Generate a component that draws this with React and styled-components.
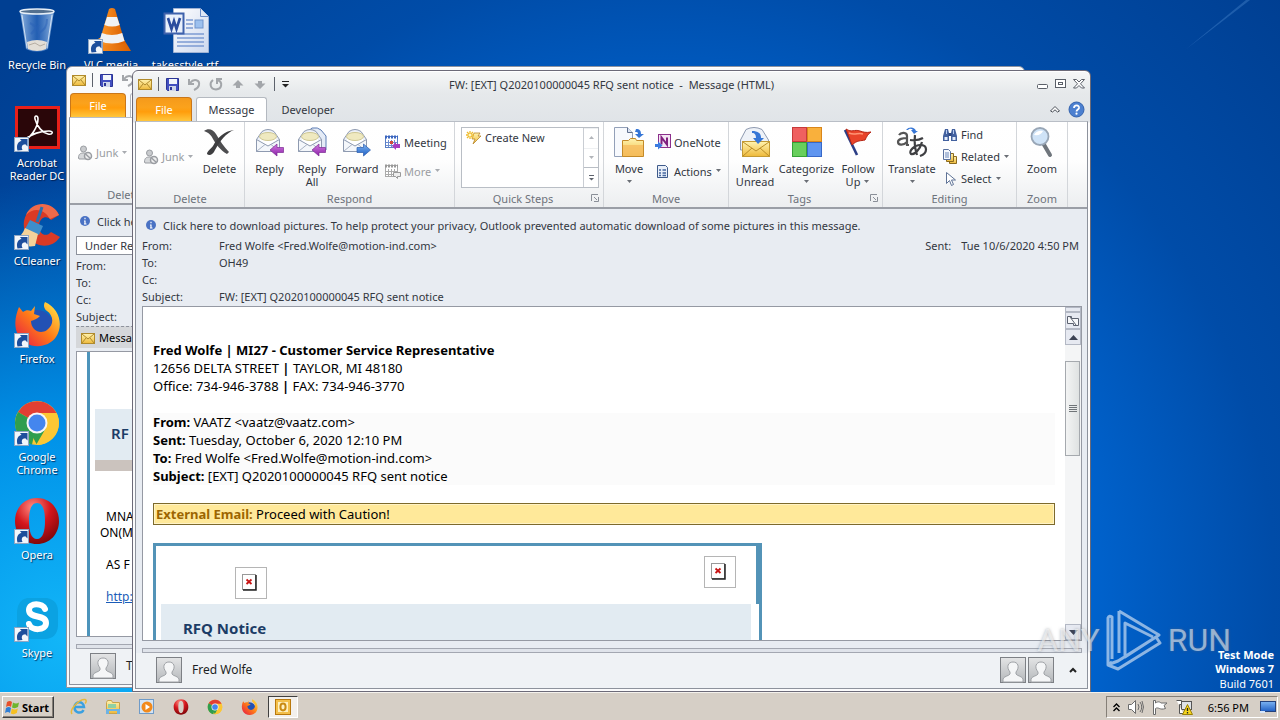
import styled, { createGlobalStyle, css } from "styled-components";

const GlobalStyle = createGlobalStyle`
  * {
    box-sizing: border-box;
  }
  body {
    margin: 0;
    font-family: "Noto Sans", "Open Sans", sans-serif;
    font-size: 11px;
    line-height: 13px;
    color: #33373f;
    overflow: hidden;
  }
  button {
    font: inherit;
    color: inherit;
    background: none;
    border: 0;
    padding: 0;
    margin: 0;
  }
  p {
    margin: 0;
  }
  svg {
    display: block;
    flex: none;
  }
`;

/* ---------- desktop ---------- */
const Screen = styled.div`
  display: flex;
  flex-direction: column;
  height: 100vh;
`;
const Desktop = styled.main`
  position: relative;
  flex: 1;
  min-height: 0;
  overflow: hidden;
  background: radial-gradient(
      ellipse 36% 66% at 5% 92%,
      rgba(18, 182, 248, 1) 0%,
      rgba(0, 158, 244, 0.85) 45%,
      rgba(0, 120, 225, 0) 100%
    ),
    radial-gradient(
      ellipse 66% 125% at 52% 85%,
      #0078e8 0%,
      #0068d6 45%,
      #004ca8 72%,
      #003f92 100%
    );
`;
const LightRay = styled.svg`
  position: absolute;
  top: 0;
  right: 0;
`;
const ShortcutArea = styled.div`
  display: flex;
  padding-top: 7px;
`;
const ShortcutColumn = styled.div`
  display: flex;
  flex-direction: column;
`;
const ShortcutButton = styled.button`
  display: flex;
  flex-direction: column;
  align-items: center;
  width: 74px;
  height: 98px;
  gap: 3px;
  color: #fff;
  text-shadow: 1px 1px 1px rgba(0, 20, 60, 0.8);
`;
const ShortcutLabel = styled.span`
  width: 64px;
  white-space: ${(props) => (props.$wrap ? "normal" : "nowrap")};
  display: flex;
  justify-content: center;
  text-align: center;
`;

/* ---------- windows ---------- */
const WindowFrame = styled.section`
  position: absolute;
  display: flex;
  flex-direction: column;
  left: ${(props) => props.$left};
  right: ${(props) => props.$right};
  top: ${(props) => props.$top};
  bottom: ${(props) => props.$bottom};
  padding: 0 2px 2px;
  border: 1px solid ${(props) => (props.$active ? "#6c6a78" : "#8d93a0")};
  border-radius: 6px 6px 0 0;
  background: ${(props) =>
    props.$active
      ? "linear-gradient(#f6f7f7 0, #e6e9eb 22px, #e0e4e8 51px, #fbfbfc 52px)"
      : "#f9fafb"};
  box-shadow: inset 0 1px 0 #fff;
`;
const TitleBar = styled.header`
  display: grid;
  grid-template-columns: 1fr auto 1fr;
  align-items: center;
  height: 26px;
  flex: none;
`;
const QuickAccess = styled.div`
  display: flex;
  align-items: center;
  gap: 6px;
  padding-left: 3px;
`;
const BarSeparator = styled.span`
  width: 1px;
  height: 14px;
  background: #5d626c;
`;
const IconButton = styled.button`
  display: flex;
  align-items: center;
  justify-content: center;
`;
const WindowTitle = styled.h1`
  margin: 0;
  font-size: 11px;
  font-weight: 400;
  white-space: pre;
`;
const WindowButtons = styled.div`
  display: flex;
  justify-content: flex-end;
  gap: 6px;
  padding-right: 3px;
`;
const TabRow = styled.nav`
  display: flex;
  align-items: flex-end;
  height: 24px;
  flex: none;
  padding-left: 1px;
`;
const FileTab = styled.button`
  width: 56px;
  height: 24px;
  color: #fff;
  border: 1px solid #c9771a;
  border-bottom: 0;
  border-radius: 4px 4px 0 0;
  background: linear-gradient(#f59a1b, #fba21c 40%, #ff9d0c 60%, #ffc63c);
`;
const Tab = styled.button`
  width: ${(props) => props.$width};
  height: 24px;
  margin-left: 4px;
  border-radius: 3px 3px 0 0;
  ${(props) =>
    props.$selected &&
    css`
      border: 1px solid #b4b9c0;
      border-bottom: 0;
      background: #fff;
    `}
`;
const TabRowEnd = styled.div`
  display: flex;
  align-items: center;
  gap: 8px;
  height: 24px;
  margin-left: auto;
  padding-right: 3px;
`;
const WindowBody = styled.div`
  display: flex;
  flex-direction: column;
  flex: 1;
  min-height: 0;
  border: 1px solid #8d929c;
  border-top-color: #b9bec6;
  background: #e8ecf2;
`;

/* ---------- ribbon ---------- */
const Ribbon = styled.div`
  display: flex;
  flex: none;
  height: 87px;
  border-bottom: 2px solid #9a9ea6;
  background: linear-gradient(#fff, #fefefe 45%, #eceef0);
  overflow: hidden;
`;
const Group = styled.section`
  display: flex;
  flex-direction: column;
  flex: none;
  width: ${(props) => props.$width};
  border-right: 1px solid #d3d6da;
`;
const GroupItems = styled.div`
  display: flex;
  height: 69px;
  padding: ${(props) => props.$padding || "4px 0 0 3px"};
`;
const GroupFooter = styled.footer`
  display: flex;
  align-items: center;
  height: 14px;
  color: #6d727b;
`;
const GroupName = styled.span`
  flex: 1;
  text-align: center;
`;
const Launcher = styled.button`
  width: 12px;
  height: 12px;
`;
const BigButton = styled.button`
  display: flex;
  flex-direction: column;
  align-items: center;
  justify-content: flex-start;
  width: ${(props) => props.$width};
  flex: none;
  gap: 4px;
  white-space: nowrap;
`;
const BigLabel = styled.span`
  display: flex;
  flex-direction: column;
  align-items: center;
`;
const LabelLine = styled.span`
  display: flex;
  align-items: center;
  gap: 3px;
  min-height: 13px;
`;
const SmallStack = styled.div`
  display: flex;
  flex-direction: column;
  justify-content: center;
  gap: ${(props) => props.$gap};
  height: 61px;
  padding-left: 4px;
`;
const SmallButton = styled.button`
  display: flex;
  align-items: center;
  gap: 3px;
  height: 16px;
  white-space: nowrap;
  color: ${(props) => (props.$disabled ? "#9a9da2" : "inherit")};
`;
const Gallery = styled.div`
  display: flex;
  width: 138px;
  height: 61px;
  border: 1px solid #b9bec5;
  background: #fff;
`;
const GalleryList = styled.div`
  flex: 1;
  padding: 1px 4px;
`;
const GalleryScroll = styled.div`
  display: grid;
  grid-template-rows: 1fr 1fr 1fr;
  width: 15px;
  border-left: 1px solid #c9cdd3;
`;
const GalleryStep = styled.button`
  display: flex;
  align-items: center;
  justify-content: center;
  border-top: 1px solid ${(props) => (props.$more ? "#b9bec5" : "#eef0f2")};
`;

/* ---------- message header ---------- */
const InfoBar = styled.div`
  display: flex;
  align-items: center;
  flex: none;
  gap: 6px;
  height: 20px;
  margin: 6px 0 2px;
  padding-left: 9px;
  white-space: nowrap;
`;
const FollowBox = styled.div`
  flex: none;
  height: 19px;
  margin: 3px 6px 2px;
  padding: 2px 8px;
  border: 1px solid #8d929c;
  background: #fff;
`;
const HeaderRows = styled.dl`
  flex: none;
  margin: 0 8px 1px 6px;
`;
const HeaderRow = styled.div`
  display: flex;
  align-items: center;
  height: 17px;
`;
const HeaderName = styled.dt`
  width: 77px;
  flex: none;
`;
const HeaderValue = styled.dd`
  margin: 0;
  flex: ${(props) => (props.$grow ? 1 : "none")};
  white-space: nowrap;
`;
const SentName = styled.dt`
  margin-right: 10px;
`;
const Attachments = styled.div`
  display: flex;
  align-items: center;
  gap: 4px;
  flex: none;
  height: 22px;
  margin: 0 6px 3px;
  padding-left: 5px;
  border-top: 1px dashed #8d929c;
  background: #d5d7da;
  color: #000;
`;

/* ---------- reading pane ---------- */
const Pane = styled.div`
  display: flex;
  flex: 1;
  min-height: 0;
  margin: 0 5px 0 6px;
  border: 1px solid #9599a3;
  background: #fff;
`;
const Mail = styled.article`
  flex: 1;
  min-width: 0;
  overflow: hidden;
  padding: 34px 10px 0;
  font-size: 13px;
  line-height: 18px;
  color: #000;
`;
const MailBlock = styled.div`
  margin-bottom: 18px;
  background: ${(props) => (props.$tinted ? "#fbfbfb" : "none")};
`;
const Caution = styled.p`
  height: 22px;
  margin-bottom: 18px;
  padding: 1px 2px;
  border: 1px solid #7d6a2c;
  background: #ffe99a;
  box-shadow: inset 0 0 0 1px #fff3c6;
`;
const CautionLabel = styled.strong`
  color: #9c6500;
`;
const Card = styled.section`
  width: 609px;
  border: 3px solid #5393b7;
  border-bottom: 0;
`;
const CardTop = styled.div`
  display: flex;
  justify-content: space-between;
  align-items: flex-start;
  height: 58px;
  padding: 10px 20px 0 79px;
  border-right: 3px solid #5393b7;
`;
const BrokenImage = styled.span`
  display: flex;
  align-items: center;
  justify-content: center;
  width: 32px;
  height: 32px;
  margin-top: ${(props) => (props.$low ? "11px" : "0")};
  padding-right: 3px;
  padding-bottom: 1px;
  border: 1px solid #b5b5b5;
`;
const CardHeading = styled.h2`
  margin: 0 8px 0 5px;
  height: 60px;
  padding: 15px 22px;
  font-size: 15px;
  line-height: 18px;
  color: #1c3c66;
  background: #e2ebf2;
`;
const ScrollBar = styled.div`
  display: flex;
  flex-direction: column;
  width: 16px;
  flex: none;
  background: #f4f5f6;
`;
const ScrollStep = styled.button`
  display: flex;
  align-items: center;
  justify-content: center;
  height: ${(props) => props.$height || "16px"};
  border: 1px solid #b3b8c4;
  background: #e6e9f1;
`;
const Track = styled.div`
  flex: 1;
  padding-top: 16px;
`;
const Thumb = styled.div`
  display: flex;
  align-items: center;
  justify-content: center;
  height: 95px;
  margin-right: 1px;
  border: 1px solid #a5a9ae;
  background: linear-gradient(90deg, #f3f4f4, #dfe2e2);
`;
const Splitter = styled.div`
  flex: none;
  height: 5px;
  margin: 7px 5px 0 6px;
  border: 1px solid #a3a7b1;
  background: #dfe3ea;
`;
const PeoplePane = styled.footer`
  display: flex;
  align-items: center;
  flex: none;
  gap: 10px;
  height: 35px;
  padding: 0 2px 2px 20px;
  font-size: 12px;
  background: #eff2f5;
  color: #1d1f23;
`;
const PeopleList = styled.div`
  display: flex;
  align-items: center;
  gap: 2px;
  margin-left: auto;
`;
const ExpandButton = styled(IconButton)`
  width: 24px;
  margin-left: 5px;
`;

/* ---------- background message ---------- */
const StripeMail = styled.article`
  flex: 1;
  min-width: 0;
  overflow: hidden;
  margin-left: 10px;
  border-left: 3px solid #4d94bb;
  padding: 57px 10px 0 5px;
  font-size: 12px;
  line-height: 16px;
  color: #000;
`;
const StripeHeading = styled.h2`
  margin: 0 0 38px;
  height: 62px;
  padding: 15px 16px;
  font-size: 15px;
  line-height: 18px;
  font-weight: 600;
  color: #1c3c66;
  background: #e2ebf2;
  border-bottom: 11px solid #cbc3be;
`;
const StripeText = styled.p`
  margin: 0 0 16px 5px;
  text-indent: 6px;
`;
const MailLink = styled.a`
  color: #1b5cb8;
`;

/* ---------- overlay + taskbar ---------- */
const Watermark = styled.div`
  position: absolute;
  right: 49px;
  bottom: 20px;
  display: flex;
  align-items: center;
  gap: 6px;
  font-family: "Roboto", sans-serif;
  font-size: 32px;
  font-weight: 400;
  line-height: 64px;
  color: rgba(255, 255, 255, 0.55);
  text-shadow: 0 0 3px rgba(100, 105, 115, 0.5);
`;
const BuildInfo = styled.div`
  position: absolute;
  right: 6px;
  bottom: 0;
  text-align: right;
  font-weight: 700;
  line-height: 14px;
  color: #fff;
`;
const BuildNumber = styled.div`
  font-weight: 400;
  line-height: 16px;
`;
const Taskbar = styled.footer`
  display: flex;
  align-items: center;
  flex: none;
  height: 28px;
  padding: 1px 2px 0;
  border-top: 1px solid #f4f1ec;
  background: #d6cfc6;
  color: #000;
`;
const StartButton = styled.button`
  display: flex;
  align-items: center;
  gap: 1px;
  width: 52px;
  height: 22px;
  padding-left: 2px;
  font-weight: 700;
  font-size: 11px;
  border: 1px solid;
  border-color: #fff #404040 #404040 #fff;
  box-shadow: inset -1px -1px 0 #857f77;
`;
const TaskButtons = styled.div`
  display: flex;
  gap: 4px;
  margin-left: 10px;
`;
const TaskButton = styled.button`
  display: flex;
  align-items: center;
  justify-content: center;
  width: 30px;
  height: 22px;
  ${(props) =>
    props.$active &&
    css`
      border: 1px solid;
      border-color: #404040 #fff #fff #404040;
      background: #f3f0ec;
    `}
`;
const Tray = styled.div`
  display: flex;
  align-items: center;
  gap: 8px;
  height: 22px;
  margin-left: auto;
  padding: 0 1px 0 6px;
  border: 1px solid;
  border-color: #857f77 #fff #fff #857f77;
`;
const Clock = styled.time`
  margin: 0 3px 0 7px;
`;

/* ---------- drawings ---------- */
const Gradients = () => (
  <svg width="0" height="0" style={{ position: "absolute" }} aria-hidden="true">
    <defs>
      <linearGradient id="gold" x1="0" y1="0" x2="0" y2="1">
        <stop offset="0" stopColor="#fff3b0" />
        <stop offset="1" stopColor="#eeb93a" />
      </linearGradient>
      <linearGradient id="paper" x1="0" y1="0" x2="1" y2="1">
        <stop offset="0" stopColor="#ffffff" />
        <stop offset="1" stopColor="#ccd8ee" />
      </linearGradient>
      <linearGradient id="purple" x1="0" y1="0" x2="0" y2="1">
        <stop offset="0" stopColor="#d37be0" />
        <stop offset="1" stopColor="#8a1fa8" />
      </linearGradient>
      <linearGradient id="blue" x1="0" y1="0" x2="0" y2="1">
        <stop offset="0" stopColor="#7db4f2" />
        <stop offset="1" stopColor="#1f5fc4" />
      </linearGradient>
      <linearGradient id="cone" x1="0" y1="0" x2="1" y2="0">
        <stop offset="0" stopColor="#ff9a2a" />
        <stop offset="1" stopColor="#d95f00" />
      </linearGradient>
      <radialGradient id="operaRed" cx="0.4" cy="0.2" r="0.9">
        <stop offset="0" stopColor="#ff8a80" />
        <stop offset="0.45" stopColor="#d4161c" />
        <stop offset="1" stopColor="#6e0508" />
      </radialGradient>
      <linearGradient id="glass" x1="0" y1="0" x2="1" y2="0">
        <stop offset="0" stopColor="#b5d2f2" stopOpacity="0.8" />
        <stop offset="0.5" stopColor="#3f78cc" stopOpacity="0.55" />
        <stop offset="1" stopColor="#b5d2f2" stopOpacity="0.8" />
      </linearGradient>
      <linearGradient id="fox" x1="0" y1="1" x2="1" y2="0">
        <stop offset="0" stopColor="#e3124a" />
        <stop offset="0.5" stopColor="#ff7a18" />
        <stop offset="1" stopColor="#fff04a" />
      </linearGradient>
      <linearGradient id="avatar" x1="0" y1="0" x2="0" y2="1">
        <stop offset="0" stopColor="#e4e5e6" />
        <stop offset="1" stopColor="#b4b7ba" />
      </linearGradient>
    </defs>
  </svg>
);

const ShortcutArrow = () => (
  <g>
    <rect x="1.5" y="32.5" width="14" height="14" fill="#f2f6fb" stroke="#8fa6c4" />
    <path
      d="M4.500 45.500C3 40 5 36.500 8.500 36L7 34h7.500v7.500L12.300 39.300C9 39.500 8 42 9.500 45z"
      fill="#1d4e9c"
    />
  </g>
);

const RecycleIcon = () => (
  <svg width="48" height="48" viewBox="0 0 48 48">
    <path d="M7 4l6 38q11 6 22 0l6-38z" fill="url(#glass)" />
    <path d="M14 35q10-4 20 0l-1 7q-9 4-18 0z" fill="#e3ded6" />
    <path d="M16 38l6-2 5 3 5-2" stroke="#b5ada3" fill="none" />
    <path d="M17 16c6 3 10 8 9 15M34 12c0 8-3 11-8 14M18 27l8-9" stroke="#2a62b8" strokeWidth="2" fill="none" opacity="0.5" />
    <ellipse cx="24" cy="4.500" rx="17" ry="2.500" fill="#54708f" stroke="#e6eef6" strokeWidth="1.500" />
    <path d="M9 8l5 33M39 8l-5 33" stroke="#e8f2fc" strokeWidth="1" opacity="0.8" />
  </svg>
);

const VlcIcon = () => (
  <svg width="48" height="48" viewBox="0 0 48 48">
    <path d="M12 31h24l8 13H4z" fill="url(#cone)" />
    <path d="M22 2q3-2 6 0l10 34q-13 6-26 0z" fill="url(#cone)" />
    <path d="M20 10h10l2.700 8q-7.500 3-15.300 0z" fill="#f0f2f4" />
    <path d="M14.800 26q10 4 20.400 0l2.300 8q-12.500 5-25 0z" fill="#f0f2f4" />
    <ShortcutArrow />
  </svg>
);

const RtfIcon = () => (
  <svg width="48" height="48" viewBox="0 0 48 48">
    <path d="M12.500 1.500h27l8 8v36h-35z" fill="url(#paper)" stroke="#9fb2d4" />
    <path d="M39.500 1.500v8h8" fill="#dfe8f6" stroke="#6f8fc8" />
    <rect x="34" y="13" width="8" height="8" fill="#9cc0ee" stroke="#6f93cc" />
    <path d="M25 13h7M25 17h7M25 21h7M16 27h27M16 31h27M16 35h27M16 39h27" stroke="#7c9ad2" strokeWidth="1.500" />
    <rect x="3.500" y="6.500" width="19" height="20" fill="#e9f0fb" stroke="#3f62ac" strokeWidth="2" />
    <path d="M7 11l3.500 11L13 14l2.500 8L19 11" fill="none" stroke="#2b4c9e" strokeWidth="2.600" />
  </svg>
);

const AcrobatIcon = () => (
  <svg width="48" height="48" viewBox="0 0 48 48">
    <rect x="3.500" y="2.500" width="42" height="40" fill="#2a0609" stroke="#e8201a" strokeWidth="3" />
    <path
      d="M13 34c5-2 12-12 12-20 0-4-4-4-3 0 2 8 8 14 13 15 5 1 6-3 1-3-8 0-18 3-23 8z"
      fill="none"
      stroke="#fff"
      strokeWidth="1.600"
    />
    <ShortcutArrow />
  </svg>
);

const CcleanerIcon = () => (
  <svg width="48" height="48" viewBox="0 0 48 48">
    <path d="M46 12C39-3 15-2 11 18c-3 22 24 34 36 16l-9-5c-5 6-13 2-12-7 1-8 8-10 12-5z" fill="#d93a25" />
    <path d="M46 12C39-3 19-2 13 12c8-8 18-6 24 4z" fill="#ef6a4a" />
    <path d="M29 4l-5 15" stroke="#2b6fae" strokeWidth="3" />
    <path d="M17 17l13 6-4 9-14-6z" fill="#3e8ecb" />
    <path d="M12 25l13 6-3 12q-12 2-20-6 7-4 10-12z" fill="#f3d29a" />
    <ShortcutArrow />
  </svg>
);

const FirefoxArt = () => (
  <g>
    <circle cx="24" cy="26" r="17" fill="#2351b4" />
    <path
      d="M32 1c14 6 19 23 11 35-9 13-31 12-38-2C0 24 3 13 6 6l4 5c3-2 5-2 8-1l4-5-1 8 6 2c-3 3-6 4-9 5 0 9 9 14 16 9 8-6 6-15 0-19-3-2-4-6-2-9z"
      fill="url(#fox)"
    />
  </g>
);
const FirefoxIcon = () => (
  <svg width="48" height="48" viewBox="0 0 48 48">
    <FirefoxArt />
    <ShortcutArrow />
  </svg>
);

const ChromeArt = () => (
  <g>
    <circle cx="24" cy="24" r="22" fill="#fbc734" />
    <path d="M24 24L5 13a22 22 0 0 1 38.500 1z" fill="#e23f33" />
    <path d="M24 24l-5 21.500A22 22 0 0 1 5 13z" fill="#2f9e4f" />
    <path d="M24 24h-9L5 13l10 16 9 17 9-16z" fill="#2f9e4f" />
    <path d="M24 14h19.500A22 22 0 0 1 23 46l10-17z" fill="#fbc734" />
    <circle cx="24" cy="24" r="10.500" fill="#f7f7f7" />
    <circle cx="24" cy="24" r="8.500" fill="#4486ee" />
  </g>
);
const ChromeIcon = () => (
  <svg width="48" height="48" viewBox="0 0 48 48">
    <ChromeArt />
    <ShortcutArrow />
  </svg>
);

const OperaArt = () => (
  <path
    fillRule="evenodd"
    d="M24 1C37 1 46 11 46 24S37 47 24 47 2 37 2 24 11 1 24 1zM24 6c-6 0-8 8-8 18s2 18 8 18 8-8 8-18-2-18-8-18z"
    fill="url(#operaRed)"
  />
);
const OperaIcon = () => (
  <svg width="48" height="48" viewBox="0 0 48 48">
    <OperaArt />
    <ShortcutArrow />
  </svg>
);

const SkypeIcon = () => (
  <svg width="48" height="48" viewBox="0 0 48 48">
    <path d="M14 3h20q11 2 11 14v14q-1 12-12 13H16q-12-2-12-13V16Q5 5 14 3z" fill="#0ba2e2" />
    <path
      d="M32 14c-2-6-16-7-16 1 0 9 17 4 17 13 0 8-15 8-17 1"
      fill="none"
      stroke="#fff"
      strokeWidth="6"
      strokeLinecap="round"
    />
    <ShortcutArrow />
  </svg>
);

const MailIcon = () => (
  <svg width="14" height="14" viewBox="0 0 14 14">
    <rect x="0.500" y="2.500" width="13" height="10" fill="url(#gold)" stroke="#b08a2c" />
    <path d="M1 3l6 5 6-5M1 12l4-5M13 12L9 7" fill="none" stroke="#b08a2c" />
  </svg>
);
const SaveIcon = () => (
  <svg width="15" height="15" viewBox="0 0 15 15">
    <path d="M1.500 1.500h12v12h-11l-1-1z" fill="#4350c0" stroke="#2b3596" />
    <rect x="4" y="2" width="8" height="5" fill="#f3f6fb" />
    <rect x="4" y="9" width="7" height="5" fill="#cfd6ea" />
    <rect x="5" y="10" width="2" height="3" fill="#2b3596" />
  </svg>
);
const UndoIcon = () => (
  <svg width="16" height="15" viewBox="0 0 16 15">
    <path d="M3 2v5h5M4 6c4-5 10-3 9 2-.500 3-3 4-5 5" fill="none" stroke="#a3a6aa" strokeWidth="2" />
  </svg>
);
const RedoIcon = () => (
  <svg width="16" height="15" viewBox="0 0 16 15">
    <path d="M5 3c-4 3-3 9 3 9.500 6-.500 7-7 2-9.500M9 7V2h5" fill="none" stroke="#a3a6aa" strokeWidth="2" />
  </svg>
);
const MoveArrow = ({ down }) => (
  <svg width="16" height="15" viewBox="0 0 16 15">
    <path
      d={down ? "M8 12L2.500 6.500H6V4h4v2.500h3.500z" : "M8 3l5.500 5.500H10V11H6V8.500H2.500z"}
      fill="#a3a6aa"
    />
  </svg>
);
const CustomizeIcon = () => (
  <svg width="9" height="10" viewBox="0 0 9 10">
    <path d="M1 2.500h7" stroke="#222" />
    <path d="M1 5h7L4.500 8.500z" fill="#222" />
  </svg>
);
const MoreStepsIcon = () => (
  <svg width="9" height="8" viewBox="0 0 9 8">
    <path d="M2 1.500h5" stroke="#5d626c" />
    <path d="M2 4h5L4.500 6.500z" fill="#5d626c" />
  </svg>
);
const Caret = ({ color = "#6a6e75", up }) => (
  <svg width="7" height="4" viewBox="0 0 7 4">
    <path d={up ? "M1 3h5L3.500 0z" : "M1 0h5L3.500 3z"} fill={color} />
  </svg>
);
const MinimizeIcon = () => (
  <svg width="12" height="12" viewBox="0 0 12 12">
    <rect x="0.500" y="6.500" width="10" height="4" rx="1" fill="#fff" stroke="#5a5f68" />
  </svg>
);
const RestoreIcon = () => (
  <svg width="12" height="12" viewBox="0 0 12 12">
    <rect x="0.500" y="1.500" width="10" height="8" fill="#fff" stroke="#5a5f68" />
    <rect x="3.500" y="4.500" width="4" height="2" fill="none" stroke="#5a5f68" />
  </svg>
);
const CloseIcon = () => (
  <svg width="12" height="12" viewBox="0 0 12 12">
    <path
      d="M.500 1.500h3L6 4l2.500-2.500h3L7.500 5.800l4 4.200h-3L6 7.500 3.500 10h-3l4-4.200z"
      fill="#fff"
      stroke="#5a5f68"
    />
  </svg>
);
const CollapseIcon = () => (
  <svg width="10" height="8" viewBox="0 0 10 8">
    <path d="M.500 6L5 1.500 9.500 6l-2 1L5 4.800 2.500 7z" fill="#fff" stroke="#4b5058" />
  </svg>
);
const HelpIcon = () => (
  <svg width="17" height="17" viewBox="0 0 17 17">
    <circle cx="8.500" cy="8.500" r="7.500" fill="#4c80d0" stroke="#3463ae" />
    <path d="M6 7c0-3.500 5.500-3.500 5 0-.300 1.500-2.500 1.500-2.500 3.500" fill="none" stroke="#fff" strokeWidth="1.800" />
    <circle cx="8.500" cy="12.700" r="1.100" fill="#fff" />
  </svg>
);
const InfoIcon = () => (
  <svg width="12" height="12" viewBox="0 0 12 12">
    <circle cx="6" cy="6" r="5" fill="#4a72c4" />
    <path d="M6 5.500V9M6 2.800v1.500M5 6h1M5 9h2.500" stroke="#fff" strokeWidth="1.200" />
  </svg>
);
const JunkIcon = () => (
  <svg width="16" height="16" viewBox="0 0 16 16">
    <circle cx="6.500" cy="4" r="3" fill="#c9cbce" stroke="#9a9da2" />
    <path d="M1.500 13c0-4 2-5 5-5s4 1 4.500 3v3h-9z" fill="#d6d8da" stroke="#9a9da2" />
    <circle cx="11" cy="11" r="3.500" fill="#eee" stroke="#9a9da2" strokeWidth="1.500" />
    <path d="M8.500 9l5 4.500" stroke="#9a9da2" strokeWidth="1.500" />
  </svg>
);
const DeleteIcon = () => (
  <svg width="32" height="32" viewBox="0 0 32 32">
    <path d="M1 5c4-3 9-2 12 3 4 7 8 13 13 18l-2 2C17 24 13 18 10 13 8 9 6 7 1 5z" fill="#4e4e50" />
    <path d="M31 4c-8 3-14 11-19 20-2 5-6 6-8 4 0-3 4-5 6-8C14 12 21 5 31 4z" fill="#3e3e40" />
  </svg>
);
const Envelope = () => (
  <g>
    <path d="M2.500 13.500L8 5.500q6-4 12 0l5.500 8v12h-23z" fill="#edf1f8" stroke="#8e9ab0" />
    <path d="M6 9h16v7l-8 4-8-4z" fill="#fff" />
    <ellipse cx="14" cy="10.500" rx="8.500" ry="4" fill="#efe9c0" stroke="#cfc894" />
    <path d="M2.500 13.500L14 20l11.500-6.500v12h-23z" fill="#f4f7fb" stroke="#8e9ab0" />
    <path d="M3 25l8-6.500M25 25l-8-6.500" stroke="#a8b2c4" />
  </g>
);
const ReplyIcon = () => (
  <svg width="32" height="32" viewBox="0 0 32 32">
    <Envelope />
    <path d="M16 24l7-6v3.500h6.500v5H23V30z" fill="url(#purple)" stroke="#7b2b94" strokeWidth="0.700" />
  </svg>
);
const ReplyAllIcon = () => (
  <svg width="32" height="32" viewBox="0 0 32 32">
    <path d="M10 7l6-5q6-1 9 2l5 6v14H10z" fill="#e4ebf6" stroke="#5c7cb4" />
    <Envelope />
    <path d="M16 24l7-6v3.500h6.500v5H23V30z" fill="url(#purple)" stroke="#7b2b94" strokeWidth="0.700" />
  </svg>
);
const ForwardIcon = () => (
  <svg width="32" height="32" viewBox="0 0 32 32">
    <Envelope />
    <path d="M29.500 24l-7-6v3.500H16v5h6.500V30z" fill="url(#blue)" stroke="#2a5cae" strokeWidth="0.700" />
  </svg>
);
const MeetingIcon = ({ gray }) => (
  <svg width="16" height="16" viewBox="0 0 16 16">
    <rect x="0.500" y="2.500" width="12" height="11" fill="#fff" stroke={gray ? "#aaa" : "#5a7ec6"} />
    <path d="M0 3h13" stroke={gray ? "#999" : "#3a66c0"} strokeWidth="3" strokeDasharray="2 1" />
    <path d="M3.500 6v7M6.500 6v7M9.500 6v7M1 8.500h11M1 11.500h11" stroke={gray ? "#aaa" : "#6f8fd0"} />
    {gray ? (
      <path d="M8.500 9.500h7v4h-3v2l-2-2h-2z" fill="#eee" stroke="#999" />
    ) : (
      <>
        <rect x="5" y="7" width="3" height="3" fill="#d04a3c" />
        <path d="M7 12l4-4v2h4v4h-4v2z" fill="#a63cc0" />
      </>
    )}
  </svg>
);
const QuickStepIcon = () => (
  <svg width="16" height="16" viewBox="0 0 16 16">
    <path d="M8 4h6l-2 3h3L7 15l2-5H6z" fill="url(#gold)" stroke="#b8862a" strokeWidth="0.800" />
    <path d="M4 2v8M0 6h8M1 3l6 6M7 3L1 9" stroke="#eebb2c" strokeWidth="1.300" />
    <circle cx="4" cy="6" r="1.500" fill="#fff6c8" />
  </svg>
);
const MoveIcon = () => (
  <svg width="32" height="32" viewBox="0 0 32 32">
    <path d="M1.500 1.500h13l5 5v24h-18z" fill="#f7f9fd" stroke="#93a0b8" />
    <path d="M14.500 1.500v5h5" fill="#dbe4f3" stroke="#61708e" />
    <path d="M9.500 30.500v-16h6l2-2h5l1 2h7v16z" fill="url(#gold)" stroke="#c48a28" />
    <path d="M10 19h20v11H10z" fill="#f6bd62" opacity="0.800" />
    <path d="M23 3c4 0 5 2 5 5h3l-5 4-4-4h3c0-2-1-2-3-2z" fill="#3676d6" />
  </svg>
);
const OneNoteIcon = () => (
  <svg width="16" height="16" viewBox="0 0 16 16">
    <rect x="3.500" y="0.500" width="12" height="13" fill="#f4e6f4" stroke="#8c2f8c" />
    <path d="M6.500 10.500v-7l5.500 7v-7" fill="none" stroke="#80207f" strokeWidth="2" />
    <path d="M0 10h3V7.500L7.500 11.500 3 15.500V13H0z" fill="#3c7be0" />
  </svg>
);
const ActionsIcon = () => (
  <svg width="16" height="16" viewBox="0 0 16 16">
    <path d="M2.500 2.500h8l2 2v10h-10z" fill="#e9eff8" stroke="#3e5a8a" />
    <path d="M4 7h2M4 10h2M4 12.500h2M7.500 7H11M7.500 10H11M7.500 12.500H11" stroke="#46679f" strokeWidth="1.500" />
  </svg>
);
const MarkUnreadIcon = () => (
  <svg width="32" height="32" viewBox="0 0 32 32">
    <path d="M1.500 14L7 3.500q8-4 16 0L29.500 14v10h-28z" fill="#eef2f8" stroke="#8e9ab0" />
    <rect x="3.500" y="15.500" width="27" height="15" fill="url(#gold)" stroke="#c49a34" />
    <path d="M4 16l13 9 13-9M4 30l9-8M30 30l-9-8" fill="none" stroke="#b98d28" />
    <path d="M13 5c6 0 9 2 9 7h3l-6 6-5-6h3c0-3-1-5-4-5z" fill="#3676d6" />
  </svg>
);
const CategorizeIcon = () => (
  <svg width="32" height="32" viewBox="0 0 32 32">
    <rect x="1.500" y="1.500" width="14" height="14" fill="#ef6060" stroke="#c73a3a" />
    <rect x="16.500" y="1.500" width="14" height="14" fill="#f9b03c" stroke="#d9861a" />
    <rect x="1.500" y="16.500" width="14" height="14" fill="#68cf5c" stroke="#36a136" />
    <rect x="16.500" y="16.500" width="14" height="14" fill="#5f95f0" stroke="#3768c8" />
  </svg>
);
const FlagIcon = () => (
  <svg width="32" height="32" viewBox="0 0 32 32">
    <path d="M3 4l12 25" stroke="#2c3f86" strokeWidth="2.600" />
    <path d="M4 3c6 4 8 0 14 2 3 1 6 2 11 1-3 2-4 4-6 8-4 1-8 0-13 5z" fill="#e8442a" stroke="#b52414" />
    <path d="M7 7c6 3 9-1 14 1" stroke="#ff9474" fill="none" strokeWidth="1.500" />
  </svg>
);
const TranslateIcon = () => (
  <svg width="32" height="32" viewBox="0 0 32 32">
    <path d="M10 4c3-4 9-3 10 1h2l-4 3-3-4h2c-2-2-4-1-5 0z" fill="#3676d6" />
    <path d="M3 9c2-3 8-3 8 1v9h2M11 12c-4 0-9 1-9 4s5 4 9 0" fill="none" stroke="#555" strokeWidth="2.200" />
    <path
      d="M14 14q8 1 13-2M19 9c-1 8 0 14 2 20M26 16c-2 8-8 13-11 12-3-3 4-9 9-9 8 0 8 8 0 11"
      fill="none"
      stroke="#3f4043"
      strokeWidth="2.200"
    />
  </svg>
);
const FindIcon = () => (
  <svg width="16" height="16" viewBox="0 0 16 16">
    <path d="M3 2h3l1 4v8H1V9zM10 2h3l2 7v5H9V6z" fill="#43619f" />
    <path d="M6.500 6h3v3h-3z" fill="#2e4680" />
    <path d="M2.500 10h3v3h-3zM10.500 10h3v3h-3z" fill="#e3ecfb" />
    <path d="M4.500 3v4M11.500 3v4" stroke="#b7caee" />
  </svg>
);
const RelatedIcon = () => (
  <svg width="16" height="16" viewBox="0 0 16 16">
    <path d="M7.500 7.500h7v7h-7z" fill="url(#gold)" stroke="#8a6a1e" />
    <path d="M4.500 4.500h7v8h-7z" fill="url(#gold)" stroke="#8a6a1e" />
    <path d="M1.500.500h5l2 2v8h-7z" fill="#f5f8fd" stroke="#58709e" />
    <path d="M3 4h4M3 6h4M3 8h4" stroke="#6b86b8" />
  </svg>
);
const SelectIcon = () => (
  <svg width="16" height="16" viewBox="0 0 16 16">
    <path d="M4.500 1.500v11l3-3 2 5 2-1-2-4.500h4z" fill="#fff" stroke="#5f7396" />
  </svg>
);
const ZoomIcon = () => (
  <svg width="32" height="32" viewBox="0 0 32 32">
    <path d="M17 17l7 12" stroke="#6f757c" strokeWidth="4" strokeLinecap="round" />
    <circle cx="14" cy="10.500" r="8.500" fill="#cfe3f7" stroke="#98a6b6" strokeWidth="1.800" />
    <path d="M8 9q3-5 9-4-2 5-9 4z" fill="#fff" />
  </svg>
);
const LauncherIcon = () => (
  <svg width="8" height="8" viewBox="0 0 8 8">
    <path d="M.500 7V.500H7M3 3l3 3M7.500 3v4.500H3" fill="none" stroke="#8a8f98" />
  </svg>
);
const RulerIcon = () => (
  <svg width="12" height="12" viewBox="0 0 12 12">
    <path d="M.500 1.500h4v2h7v7h-5v-2h-6z" fill="#f7f8fa" stroke="#5c6270" />
    <path d="M3 2l6 8" stroke="#5c6270" />
  </svg>
);
const Arrow = ({ up }) => (
  <svg width="9" height="5" viewBox="0 0 9 5">
    <path d={up ? "M0 5h9L4.500 0z" : "M0 0h9L4.500 5z"} fill="#3c4254" />
  </svg>
);
const GripIcon = () => (
  <svg width="8" height="7" viewBox="0 0 8 7">
    <path d="M0 .500h8M0 2.500h8M0 4.500h8M0 6.500h8" stroke="#6f7478" />
  </svg>
);
const BrokenIcon = () => (
  <svg width="15" height="17" viewBox="0 0 15 17">
    <rect x="0.500" y="0.500" width="13" height="15" fill="#fff" stroke="#999" />
    <path d="M14 1v15H1" fill="none" stroke="#222" strokeWidth="1.500" />
    <path d="M4.500 5.500l5 4.500M9.500 5.500L4.500 10" stroke="#c81414" strokeWidth="1.800" />
  </svg>
);
const AvatarIcon = () => (
  <svg width="26" height="26" viewBox="0 0 26 26">
    <rect x="0.500" y="0.500" width="25" height="25" fill="url(#avatar)" stroke="#7d8085" />
    <path
      d="M3 25v-3c1-3 6-3 7-5v-2C6 10 8 5 13 5s7 5 3 10v2c1 2 6 2 7 5v3z"
      fill="#f5f6f7"
      stroke="#9fa2a6"
    />
  </svg>
);
const ExpandIcon = () => (
  <svg width="8" height="6" viewBox="0 0 8 6">
    <path d="M1 5l3-3 3 3" fill="none" stroke="#222" strokeWidth="2" />
  </svg>
);
const PlayLogo = () => (
  <svg width="56" height="62" viewBox="0 0 56 62">
    <path
      d="M6 50V8q-3-2-4 1v47l4-3M13 2l40 24-34 22V14l28 14M13 2v42M2 56l10 4 42-26-4-6-38 24-8 3"
      fill="none"
      stroke="rgba(255,255,255,0.550)"
      strokeWidth="3"
      strokeLinejoin="round"
    />
  </svg>
);
const WindowsFlag = () => (
  <svg width="16" height="16" viewBox="0 0 16 16">
    <path d="M2 3q3-2 5 0L6 8Q4 6 1 8z" fill="#e8502a" />
    <path d="M8 3.500q3 2 6 0L13 8q-3 2-6 .500z" fill="#6fb52c" />
    <path d="M1 9q3-2 5 0l-1 5q-2-2-5 0z" fill="#2f7fd6" />
    <path d="M6.800 9.500q3 2 6 0l-1 4.500q-3 2-6 .500z" fill="#f6c022" />
  </svg>
);
const IeIcon = () => (
  <svg width="18" height="18" viewBox="0 0 18 18">
    <path d="M13.500 12c-2 4-9 3.500-9-3 0-6 9-6.500 9.500 0h-9" fill="none" stroke="#3aa0e0" strokeWidth="2.500" />
    <path d="M2 16C-1 12 9 1 15 1.500c2 .500 1 3 0 4" fill="none" stroke="#e7b93a" strokeWidth="1.500" />
  </svg>
);
const ExplorerIcon = () => (
  <svg width="18" height="18" viewBox="0 0 18 18">
    <path d="M2.500 15.500v-11l1-2h4l1 2h7v11z" fill="url(#gold)" stroke="#c9a24a" />
    <path d="M4 6h8v4H4z" fill="#8fd0a4" />
    <path d="M2 16v-5h14v5h-3v-3H5v3z" fill="#6eb3e4" />
  </svg>
);
const PlayerIcon = () => (
  <svg width="18" height="18" viewBox="0 0 18 18">
    <rect x="1.500" y="1.500" width="14" height="14" fill="#d4e4f4" stroke="#6f9bc8" />
    <circle cx="9" cy="9" r="5.500" fill="#f28a1c" />
    <path d="M7.500 6v6l4.500-3z" fill="#fff" />
  </svg>
);
const OutlookIcon = () => (
  <svg width="18" height="18" viewBox="0 0 18 18">
    <rect x="1.500" y="1.500" width="15" height="15" fill="#f3bf4a" stroke="#b9780c" />
    <rect x="4" y="4" width="10" height="10" fill="#fff0bf" />
    <ellipse cx="9" cy="9" rx="2.600" ry="3.400" fill="none" stroke="#c98a12" strokeWidth="2" />
  </svg>
);
const TrayChevron = () => (
  <svg width="7" height="9" viewBox="0 0 7 9">
    <path d="M.500 4l3-3 3 3M.500 8l3-3 3 3" fill="none" stroke="#000" strokeWidth="1.400" />
  </svg>
);
const SpeakerIcon = () => (
  <svg width="16" height="16" viewBox="0 0 16 16">
    <path d="M.500 5.500h3l4-4v13l-4-4h-3z" fill="#fff" stroke="#6b6b6b" />
    <path d="M10 5q2 3 0 6M12 3q3.500 5 0 10M14 2q3 6 0 12" fill="none" stroke="#6b6b6b" />
  </svg>
);
const ActionFlagIcon = () => (
  <svg width="16" height="16" viewBox="0 0 16 16">
    <path d="M1.500 1.500v14h2v-6c3-2 4 2 10 0l-1.500-3 3-2.500h-6c-2-2-4-1-5.500 0V1.500z" fill="#fff" stroke="#6b6b6b" />
  </svg>
);
const NetworkIcon = () => (
  <svg width="17" height="16" viewBox="0 0 17 16">
    <rect x="5.500" y="2.500" width="10" height="8" fill="#dfe3e8" stroke="#555" />
    <path d="M.500 1.500h5v4h-2v9h4" fill="#fff" stroke="#555" />
    <path d="M11.500 5.500l5 10h-10z" fill="#f5d41e" stroke="#9b8106" />
    <path d="M11.500 9v3M11.500 13v1.500" stroke="#222" strokeWidth="1.300" />
  </svg>
);
const ShowDesktopIcon = () => (
  <svg width="16" height="14" viewBox="0 0 16 14">
    <rect x="0.500" y="1.500" width="15" height="10" fill="url(#blue)" stroke="#24427c" />
    <rect x="0" y="11" width="5" height="2" fill="#d8e6f8" />
  </svg>
);

/* ---------- pieces ---------- */
const shortcuts = [
  [
    { name: "Recycle Bin", Icon: RecycleIcon },
    { name: "Acrobat Reader DC", Icon: AcrobatIcon, wrap: true },
    { name: "CCleaner", Icon: CcleanerIcon },
    { name: "Firefox", Icon: FirefoxIcon },
    { name: "Google Chrome", Icon: ChromeIcon, wrap: true },
    { name: "Opera", Icon: OperaIcon },
    { name: "Skype", Icon: SkypeIcon },
  ],
  [{ name: "VLC media", Icon: VlcIcon }],
  [{ name: "takesstyle.rtf", Icon: RtfIcon }],
];

const Big = ({ icon, lines, width, caret }) => (
  <BigButton $width={width}>
    {icon}
    <BigLabel>
      {lines.map((line, i) => (
        <LabelLine key={line}>
          {line}
          {caret === "inline" && i === lines.length - 1 && <Caret />}
        </LabelLine>
      ))}
      {caret === "below" && (
        <LabelLine>
          <Caret />
        </LabelLine>
      )}
    </BigLabel>
  </BigButton>
);

const Small = ({ icon, label, caret, disabled }) => (
  <SmallButton $disabled={disabled}>
    {icon}
    {label}
    {caret && <Caret color={disabled ? "#a8abb0" : undefined} />}
  </SmallButton>
);

const RibbonGroup = ({ name, width, padding, launcher, children }) => (
  <Group $width={width}>
    <GroupItems $padding={padding}>{children}</GroupItems>
    <GroupFooter>
      <GroupName>{name}</GroupName>
      {launcher && (
        <Launcher aria-label={`${name} options`}>
          <LauncherIcon />
        </Launcher>
      )}
    </GroupFooter>
  </Group>
);

const DeleteGroup = () => (
  <RibbonGroup name="Delete" width="109px">
    <SmallStack $gap="0">
      <Small icon={<JunkIcon />} label="Junk" caret disabled />
    </SmallStack>
    <Big icon={<DeleteIcon />} lines={["Delete"]} width="50px" />
  </RibbonGroup>
);

const QuickAccessBar = () => (
  <QuickAccess>
    <MailIcon />
    <BarSeparator />
    <IconButton aria-label="Save">
      <SaveIcon />
    </IconButton>
    <IconButton aria-label="Undo">
      <UndoIcon />
    </IconButton>
    <IconButton aria-label="Redo">
      <RedoIcon />
    </IconButton>
    <IconButton aria-label="Previous item">
      <MoveArrow />
    </IconButton>
    <IconButton aria-label="Next item">
      <MoveArrow down />
    </IconButton>
    <BarSeparator />
    <IconButton aria-label="Customize">
      <CustomizeIcon />
    </IconButton>
  </QuickAccess>
);

const BackgroundMessage = () => (
  <WindowFrame $left="66px" $right="255px" $top="66px" $bottom="4px">
    <TitleBar>
      <QuickAccessBar />
    </TitleBar>
    <TabRow>
      <FileTab>File</FileTab>
      <Tab $selected $width="71px" aria-label="Message" />
    </TabRow>
    <WindowBody>
      <Ribbon>
        <DeleteGroup />
      </Ribbon>
      <InfoBar>
        <InfoIcon />
        Click here
      </InfoBar>
      <FollowBox>Under Re</FollowBox>
      <HeaderRows>
        {["From:", "To:", "Cc:", "Subject:"].map((name) => (
          <HeaderRow key={name}>
            <HeaderName>{name}</HeaderName>
          </HeaderRow>
        ))}
      </HeaderRows>
      <Attachments>
        <MailIcon />
        Messa
      </Attachments>
      <Pane>
        <StripeMail>
          <StripeHeading>RF</StripeHeading>
          <StripeText>
            MNA
            <br />
            ON(M
          </StripeText>
          <StripeText>AS F</StripeText>
          <StripeText>
            <MailLink href="#link">http:/</MailLink>
          </StripeText>
        </StripeMail>
      </Pane>
      <Splitter />
      <PeoplePane>
        <AvatarIcon />T
      </PeoplePane>
    </WindowBody>
  </WindowFrame>
);

const MessageRibbon = () => (
  <Ribbon>
    <DeleteGroup />
    <RibbonGroup name="Respond" width="210px">
      <Big icon={<ReplyIcon />} lines={["Reply"]} width="43px" />
      <Big icon={<ReplyAllIcon />} lines={["Reply", "All"]} width="42px" />
      <Big icon={<ForwardIcon />} lines={["Forward"]} width="48px" />
      <SmallStack $gap="13px">
        <Small icon={<MeetingIcon />} label="Meeting" />
        <Small icon={<MeetingIcon gray />} label="More" caret disabled />
      </SmallStack>
    </RibbonGroup>
    <RibbonGroup name="Quick Steps" width="149px" padding="5px 0 0 6px" launcher>
      <Gallery>
        <GalleryList>
          <Small icon={<QuickStepIcon />} label="Create New" />
        </GalleryList>
        <GalleryScroll>
          <GalleryStep aria-label="Scroll up">
            <Caret color="#b2b5ba" up />
          </GalleryStep>
          <GalleryStep aria-label="Scroll down">
            <Caret color="#b2b5ba" />
          </GalleryStep>
          <GalleryStep $more aria-label="More steps">
            <MoreStepsIcon />
          </GalleryStep>
        </GalleryScroll>
      </Gallery>
    </RibbonGroup>
    <RibbonGroup name="Move" width="125px">
      <Big icon={<MoveIcon />} lines={["Move"]} width="44px" caret="below" />
      <SmallStack $gap="13px">
        <Small icon={<OneNoteIcon />} label="OneNote" />
        <Small icon={<ActionsIcon />} label="Actions" caret />
      </SmallStack>
    </RibbonGroup>
    <RibbonGroup name="Tags" width="154px" launcher>
      <Big icon={<MarkUnreadIcon />} lines={["Mark", "Unread"]} width="46px" />
      <Big icon={<CategorizeIcon />} lines={["Categorize"]} width="57px" caret="below" />
      <Big icon={<FlagIcon />} lines={["Follow", "Up"]} width="46px" caret="inline" />
    </RibbonGroup>
    <RibbonGroup name="Editing" width="134px">
      <Big icon={<TranslateIcon />} lines={["Translate"]} width="52px" caret="below" />
      <SmallStack $gap="6px">
        <Small icon={<FindIcon />} label="Find" />
        <Small icon={<RelatedIcon />} label="Related" caret />
        <Small icon={<SelectIcon />} label="Select" caret />
      </SmallStack>
    </RibbonGroup>
    <RibbonGroup name="Zoom" width="51px">
      <Big icon={<ZoomIcon />} lines={["Zoom"]} width="44px" />
    </RibbonGroup>
  </Ribbon>
);

const ActiveMessage = () => (
  <WindowFrame $active $left="132px" $right="189px" $top="70px" $bottom="0">
    <TitleBar>
      <QuickAccessBar />
      <WindowTitle>FW: [EXT] Q2020100000045 RFQ sent notice  -  Message (HTML)</WindowTitle>
      <WindowButtons>
        <IconButton aria-label="Minimize">
          <MinimizeIcon />
        </IconButton>
        <IconButton aria-label="Restore">
          <RestoreIcon />
        </IconButton>
        <IconButton aria-label="Close">
          <CloseIcon />
        </IconButton>
      </WindowButtons>
    </TitleBar>
    <TabRow>
      <FileTab>File</FileTab>
      <Tab $selected $width="71px">
        Message
      </Tab>
      <Tab $width="74px">Developer</Tab>
      <TabRowEnd>
        <IconButton aria-label="Collapse ribbon">
          <CollapseIcon />
        </IconButton>
        <IconButton aria-label="Help">
          <HelpIcon />
        </IconButton>
      </TabRowEnd>
    </TabRow>
    <WindowBody>
      <MessageRibbon />
      <InfoBar>
        <InfoIcon />
        Click here to download pictures. To help protect your privacy, Outlook prevented automatic
        download of some pictures in this message.
      </InfoBar>
      <HeaderRows>
        <HeaderRow>
          <HeaderName>From:</HeaderName>
          <HeaderValue $grow>Fred Wolfe &lt;Fred.Wolfe@motion-ind.com&gt;</HeaderValue>
          <SentName>Sent:</SentName>
          <HeaderValue>Tue 10/6/2020 4:50 PM</HeaderValue>
        </HeaderRow>
        <HeaderRow>
          <HeaderName>To:</HeaderName>
          <HeaderValue>OH49</HeaderValue>
        </HeaderRow>
        <HeaderRow>
          <HeaderName>Cc:</HeaderName>
        </HeaderRow>
        <HeaderRow>
          <HeaderName>Subject:</HeaderName>
          <HeaderValue>FW: [EXT] Q2020100000045 RFQ sent notice</HeaderValue>
        </HeaderRow>
      </HeaderRows>
      <Pane>
        <Mail>
          <MailBlock>
            <p>
              <strong>Fred Wolfe | MI27 - Customer Service Representative</strong>
            </p>
            <p>
              12656 DELTA STREET <strong>|</strong> TAYLOR, MI 48180
            </p>
            <p>
              Office: 734-946-3788 <strong>|</strong> FAX: 734-946-3770
            </p>
          </MailBlock>
          <MailBlock $tinted>
            <p>
              <strong>From:</strong> VAATZ &lt;vaatz@vaatz.com&gt;
            </p>
            <p>
              <strong>Sent:</strong> Tuesday, October 6, 2020 12:10 PM
            </p>
            <p>
              <strong>To:</strong> Fred Wolfe &lt;Fred.Wolfe@motion-ind.com&gt;
            </p>
            <p>
              <strong>Subject:</strong> [EXT] Q2020100000045 RFQ sent notice
            </p>
          </MailBlock>
          <Caution>
            <CautionLabel>External Email:</CautionLabel> Proceed with Caution!
          </Caution>
          <Card>
            <CardTop>
              <BrokenImage $low>
                <BrokenIcon />
              </BrokenImage>
              <BrokenImage>
                <BrokenIcon />
              </BrokenImage>
            </CardTop>
            <CardHeading>RFQ Notice</CardHeading>
          </Card>
        </Mail>
        <ScrollBar>
          <ScrollStep $height="5px" aria-label="Split" />
          <ScrollStep $height="17px" aria-label="Ruler">
            <RulerIcon />
          </ScrollStep>
          <ScrollStep aria-label="Scroll up">
            <Arrow up />
          </ScrollStep>
          <Track>
            <Thumb>
              <GripIcon />
            </Thumb>
          </Track>
          <ScrollStep aria-label="Scroll down">
            <Arrow />
          </ScrollStep>
        </ScrollBar>
      </Pane>
      <Splitter />
      <PeoplePane>
        <AvatarIcon />
        Fred Wolfe
        <PeopleList>
          <AvatarIcon />
          <AvatarIcon />
          <ExpandButton aria-label="Expand people pane">
            <ExpandIcon />
          </ExpandButton>
        </PeopleList>
      </PeoplePane>
    </WindowBody>
  </WindowFrame>
);

const App = () => {
  return (
    <Screen>
      <GlobalStyle />
      <Gradients />
      <Desktop>
        <LightRay width="240" height="60" viewBox="0 0 240 60">
          <path d="M145 50L206 0h4z" fill="rgba(120,180,240,0.250)" />
        </LightRay>
        <ShortcutArea>
          {shortcuts.map((column, i) => (
            <ShortcutColumn key={i}>
              {column.map(({ name, Icon, wrap }) => (
                <ShortcutButton key={name}>
                  <Icon />
                  <ShortcutLabel $wrap={wrap}>{name}</ShortcutLabel>
                </ShortcutButton>
              ))}
            </ShortcutColumn>
          ))}
        </ShortcutArea>
        <BackgroundMessage />
        <ActiveMessage />
        <Watermark>
          <span>ANY</span>
          <PlayLogo />
          <span>RUN</span>
        </Watermark>
        <BuildInfo>
          <div>Test Mode</div>
          <div>Windows 7</div>
          <BuildNumber>Build 7601</BuildNumber>
        </BuildInfo>
      </Desktop>
      <Taskbar>
        <StartButton>
          <WindowsFlag />
          Start
        </StartButton>
        <TaskButtons>
          <TaskButton aria-label="Internet Explorer">
            <IeIcon />
          </TaskButton>
          <TaskButton aria-label="Explorer">
            <ExplorerIcon />
          </TaskButton>
          <TaskButton aria-label="Media Player">
            <PlayerIcon />
          </TaskButton>
          <TaskButton aria-label="Opera">
            <svg width="16" height="16" viewBox="0 0 48 48">
              <OperaArt />
            </svg>
          </TaskButton>
          <TaskButton aria-label="Chrome">
            <svg width="16" height="16" viewBox="0 0 48 48">
              <ChromeArt />
            </svg>
          </TaskButton>
          <TaskButton aria-label="Firefox">
            <svg width="17" height="17" viewBox="0 0 48 48">
              <FirefoxArt />
            </svg>
          </TaskButton>
          <TaskButton $active aria-label="Outlook">
            <OutlookIcon />
          </TaskButton>
        </TaskButtons>
        <Tray>
          <TrayChevron />
          <SpeakerIcon />
          <ActionFlagIcon />
          <NetworkIcon />
          <Clock>6:56 PM</Clock>
          <ShowDesktopIcon />
        </Tray>
      </Taskbar>
    </Screen>
  );
};

export default App;
